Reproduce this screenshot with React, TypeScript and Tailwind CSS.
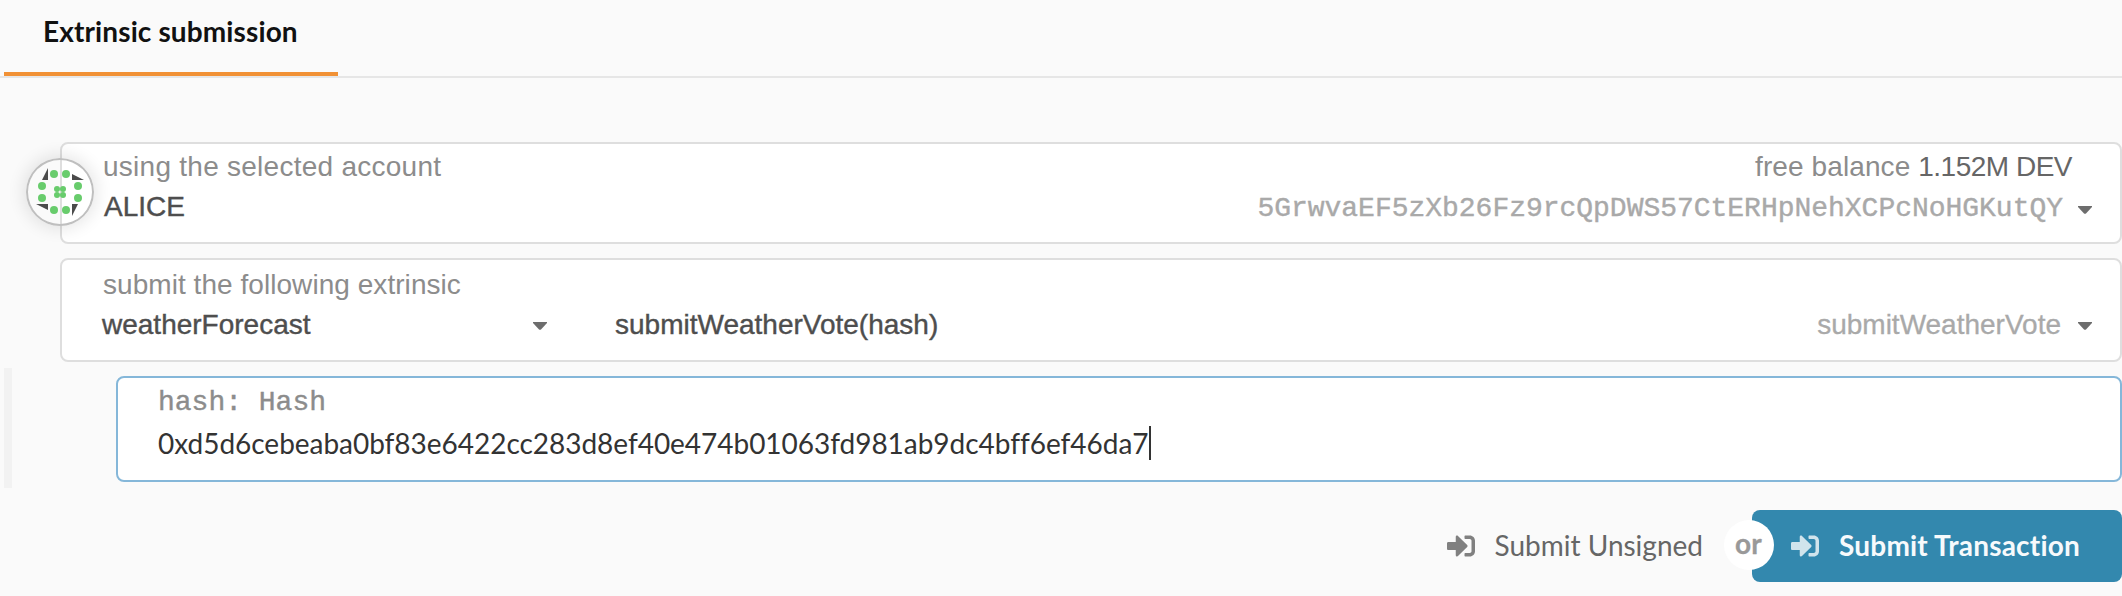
import type { ReactNode } from "react";

const helv = "font-['Liberation_Sans',Arial,sans-serif]";
const mono = "font-['Liberation_Mono','Courier_New',monospace] [-webkit-text-stroke:0.4px_currentColor]";
const strong = helv + " text-[#4e4e4e] [-webkit-text-stroke:0.4px_currentColor]";

function Text({ className, children }: { className: string; children: ReactNode }) {
  return <span className={"block whitespace-pre text-[28px] leading-[40px] " + className}>{children}</span>;
}

function Caret({ className = "" }: { className?: string }) {
  return (
    <svg className={"h-2 w-3.5 shrink-0 " + className} viewBox="0 0 14 8" fill="#6d6d6d">
      <path d="M0 0h14v1L8 7.4q-1 .9-2 0L0 1z" />
    </svg>
  );
}

function SignIn({ className }: { className: string }) {
  return (
    <svg className={"h-7 w-7 shrink-0 " + className} viewBox="0 0 512 512" fill="currentColor">
      <path d="M416 448h-84c-6.600 0-12-5.400-12-12v-40c0-6.600 5.400-12 12-12h84c17.700 0 32-14.300 32-32V160c0-17.700-14.300-32-32-32h-84c-6.600 0-12-5.400-12-12V76c0-6.600 5.400-12 12-12h84c53 0 96 43 96 96v192c0 53-43 96-96 96zm-47-209L201 71c-15-15-41-4.500-41 17v96H24c-13.300 0-24 10.700-24 24v96c0 13.300 10.700 24 24 24h136v96c0 21.500 26 32 41 17l168-168c9.300-9.400 9.300-24.600 0-34z" />
    </svg>
  );
}

const dots = [
  [28, 16], [40, 16], [52, 28], [52, 40], [40, 52], [28, 52], [16, 40], [16, 28],
];

function Identicon() {
  return (
    <svg className="h-[68px] w-[68px]" viewBox="0 0 68 68">
      <g fill="#4b4b4b">
        <path d="M16 22 22 10v12z" />
        <path d="M46 22V16l12 6z" />
        <path d="M22 46v6l-12-6z" />
        <path d="M46 46h6l-6 12z" />
      </g>
      <g fill="#68cc6c">
        {dots.map(([x, y]) => (
          <circle key={x + "-" + y} cx={x} cy={y} r="4" />
        ))}
        {[31, 37].map((x) => [31, 37].map((y) => <circle key={x + "-" + y} cx={x} cy={y} r="3" />))}
      </g>
    </svg>
  );
}

export default function App() {
  return (
    <div className="flex h-[596px] w-[2122px] flex-col overflow-hidden bg-[#fafafa] font-[Lato,sans-serif] [font-variant-ligatures:none]">
      <nav className="flex h-[78px] border-b-2 border-[#e6e6e6] pl-1">
        <div className="h-[76px] w-[334px] border-b-4 border-[#f19135] pl-[39px] pt-[11px]">
          <Text className="font-bold tracking-[0.12px] text-[#111]">Extrinsic submission</Text>
        </div>
      </nav>

      <section className="relative ml-[60px] mt-16 flex h-[102px] justify-between rounded-lg border-2 border-[#dedede] bg-white pl-[41px] pr-7">
        <div className="pt-[3px]">
          <Text className={helv + " tracking-[0.26px] text-[#8c8c8c]"}>using the selected account</Text>
          <Text className={strong + " pl-px"}>ALICE</Text>
        </div>
        <div className="flex flex-col items-end pt-[3px]">
          <Text className={helv + " pr-5 tracking-[0.1px] text-[#8c8c8c]"}>
            free balance <span className="tracking-[-0.5px] text-[#666]">1.152M DEV</span>
          </Text>
          <div className="flex items-start gap-[15px]">
            <Text className={mono + " pt-0.5 tracking-[-0.02px] text-[#a9a9a9]"}>
              5GrwvaEF5zXb26Fz9rcQpDWS57CtERHpNehXCPcNoHGKutQY
            </Text>
            <Caret className="mt-[19px]" />
          </div>
        </div>
        <div className="absolute -left-9 top-[14px] rounded-full shadow-[0_0_16px_4px_rgba(0,0,0,0.09)]">
          <div className="h-[68px] w-[68px] rounded-full bg-[linear-gradient(90deg,#fafafa_34px,#dedede_34px,#dedede_36px,#fff_36px)] shadow-[inset_0_0_0_2px_#bfbfbf]">
            <Identicon />
          </div>
        </div>
      </section>

      <section className="ml-[60px] mt-3.5 h-[104px] rounded-lg border-2 border-[#dedede] bg-white pl-[40px] pr-7 pt-[5px]">
        <Text className={helv + " pl-px tracking-[0.05px] text-[#8c8c8c]"}>submit the following extrinsic</Text>
        <div className="flex items-start">
          <div className="flex w-[445px] items-start justify-between">
            <Text className={strong}>weatherForecast</Text>
            <Caret className="mt-[17px]" />
          </div>
          <Text className={strong + " ml-[68px]"}>submitWeatherVote(hash)</Text>
          <Text className={helv + " ml-auto mr-[17px] text-[#a9a9a9] [-webkit-text-stroke:0.3px_currentColor]"}>
            submitWeatherVote
          </Text>
          <Caret className="mt-[17px]" />
        </div>
      </section>

      <div className="mt-1.5 ml-1 flex h-[120px] border-l-8 border-[#f2f2f2] pl-[104px] pt-2">
        <div className="h-[106px] flex-1 rounded-lg border-2 border-[#85b7d9] bg-white pl-[40px] pt-[5px]">
          <Text className={mono + " text-[#8c8c8c]"}>hash: Hash</Text>
          <div className="flex items-start">
            <Text className="tracking-[-0.03px] text-[#333]">
              0xd5d6cebeaba0bf83e6422cc283d8ef40e474b01063fd981ab9dc4bff6ef46da7
            </Text>
            <span className="mt-[3px] h-[34px] w-0.5 bg-[#333]" />
          </div>
        </div>
      </div>

      <div className="mt-[22px] flex h-[72px] justify-end">
        <button className="flex items-center text-[#666]">
          <SignIn className="text-[#808080]" />
          <Text className="ml-5 mr-[49px] -mt-0.5">Submit Unsigned</Text>
        </button>
        <button className="relative flex w-[370px] items-center rounded-lg bg-[#3388ae] pl-[39px] text-white">
          <SignIn className="text-[#d1e4ec]" />
          <Text className="-mt-0.5 ml-5 font-bold tracking-[0.2px] text-[#f7fafc]">Submit Transaction</Text>
          <span className="absolute -left-7 top-2.5 flex h-[50px] w-[50px] items-center justify-center rounded-full bg-white pb-1 pr-px text-[28px] leading-[40px] font-bold tracking-[0.3px] text-[#999] [-webkit-text-stroke:0.3px_currentColor]">
            or
          </span>
        </button>
      </div>
    </div>
  );
}
